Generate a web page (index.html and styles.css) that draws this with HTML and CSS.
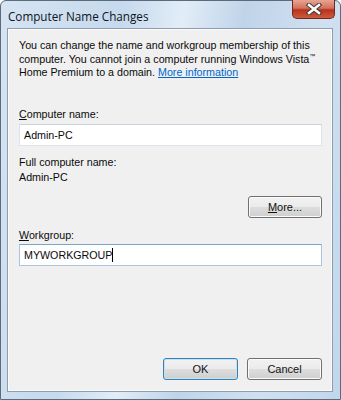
FILE: index.html
```html
<!DOCTYPE html>
<html lang="en">

<head>
    <meta charset="UTF-8">
    <meta name="viewport" content="width=device-width, initial-scale=1.0">
    <title>Computer Name Changes</title>
    <link rel="stylesheet" href="styles.css">
</head>

<body>
    <div class="window">
        <div class="titlebar">
            <span class="title">Computer Name Changes</span>
            <button class="close" aria-label="Close">
                <svg width="18" height="12" viewBox="0 0 18 12">
                    <path d="M4 2 L14 10 M14 2 L4 10" stroke="#3b3b3b" stroke-width="4.5" stroke-linecap="square" fill="none" />
                    <path d="M4 2 L14 10 M14 2 L4 10" stroke="#ffffff" stroke-width="2.5" stroke-linecap="square" fill="none" />
                </svg>
            </button>
        </div>
        <div class="panel">
            <p class="intro">
                You can change the name and workgroup membership of this<br>
                computer. You cannot join a computer running Windows Vista<sup>™</sup><br>
                Home Premium to a domain. <a href="#" class="link">More information</a>
            </p>

            <label class="label first"><u>C</u>omputer name:</label>
            <div class="field">Admin-PC</div>

            <div class="label gap">Full computer name:</div>
            <div class="value">Admin-PC</div>

            <div class="more-row">
                <button class="btn"><u>M</u>ore...</button>
            </div>

            <label class="label wg"><u>W</u>orkgroup:</label>
            <div class="field focused">MYWORKGROUP<span class="caret"></span></div>

            <div class="actions">
                <button class="btn default">OK</button>
                <button class="btn">Cancel</button>
            </div>
        </div>
    </div>
</body>

</html>
```

FILE: styles.css
```css
body {
    margin: 0;
    width: 341px;
    height: 400px;
    font-family: "Liberation Sans", Arial, sans-serif;
    font-size: 10.7px;
    color: #0a0a0a;
}
.window {
    box-sizing: border-box;
    width: 341px;
    height: 400px;
    display: flex;
    flex-direction: column;
    border: 1px solid #5b6b7c;
    border-radius: 6px 6px 0 0;
    background: linear-gradient(100deg, #d6e4f2 0%, #c6d9ed 30%, #e2edf7 45%, #c0d4e9 60%, #d0e0f0 80%, #c2d6eb 100%);
}
.titlebar {
    height: 27px;
    display: flex;
    justify-content: space-between;
    align-items: flex-start;
    padding-left: 7px;
}
.title {
    margin-top: 7px;
    font-family: "Open Sans", sans-serif;
    font-size: 11.7px;
    color: #0c1520;
}
.close {
    margin: -1px 5px 0 0;
    width: 43px;
    height: 19px;
    padding: 0;
    display: flex;
    align-items: center;
    justify-content: center;
    border: 1px solid #6e2a22;
    border-top: none;
    border-radius: 0 0 5px 5px;
    background: linear-gradient(#e8a493 0%, #d4715c 45%, #b8321c 55%, #cf5a3e 100%);
}
.panel {
    flex: 1;
    margin: 0 7px 7px 6px;
    display: flex;
    flex-direction: column;
    padding: 10px 10px 11px 11px;
    border: 1px solid #8e9eaf;
    box-shadow: inset 0 0 0 1px #fbfbfb;
    background-color: #f0f0f0;
}
.intro {
    margin: 0;
    line-height: 13.5px;
    white-space: nowrap;
}
.intro sup {
    font-size: 6px;
    line-height: 0;
}
.link {
    color: #0066cc;
}
.label {
    display: block;
    line-height: 14px;
}
.label.first {
    margin-top: 27px;
}
.label.gap {
    margin-top: 9px;
}
.label.wg {
    margin-top: 10px;
}
.field {
    box-sizing: border-box;
    height: 22px;
    margin-top: 3px;
    padding: 0 4px;
    display: flex;
    align-items: center;
    background-color: #ffffff;
    border: 1px solid #dde3ea;
    border-top-color: #c9d1da;
}
.field.focused {
    margin-top: 2px;
    border-color: #a9c3e0;
    border-top-color: #7da2ce;
}
.caret {
    display: inline-block;
    width: 1px;
    height: 14px;
    background-color: #000;
}
.value {
    margin-top: 1px;
    line-height: 14px;
}
.more-row {
    margin-top: 12px;
    display: flex;
    justify-content: flex-end;
}
.btn {
    box-sizing: border-box;
    width: 74px;
    height: 22px;
    padding: 0;
    font-family: "Liberation Sans", Arial, sans-serif;
    font-size: 11px;
    color: #111;
    border: 1px solid #707070;
    border-radius: 3px;
    box-shadow: inset 0 0 0 1px #fbfbfb;
    background: linear-gradient(#f2f2f2 0%, #ebebeb 50%, #dddddd 51%, #cfcfcf 100%);
}
.btn.default {
    border-color: #3c7fb1;
    box-shadow: inset 0 0 0 1px #bfe4f8;
}
.actions {
    margin-top: auto;
    display: flex;
    justify-content: flex-end;
    gap: 9px;
}
.actions .btn {
    width: 75px;
}
```
